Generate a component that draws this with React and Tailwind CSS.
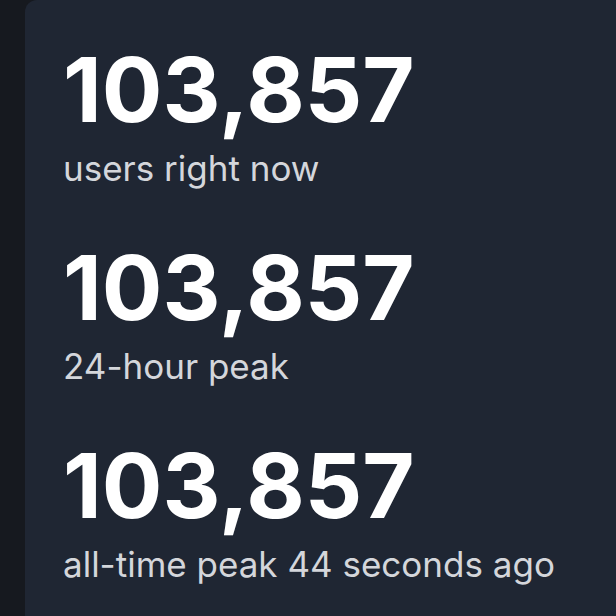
export default function App() {
  const stats = [
    { value: "103,857", label: "users right now" },
    { value: "103,857", label: "24-hour peak" },
    { value: "103,857", label: "all-time peak 44 seconds ago" },
  ];

  return (
    <div className="w-[616px] h-[616px] overflow-hidden bg-[#16191f] pl-[25px] flex font-['Inter',sans-serif]">
      <div className="flex-1 bg-[#1f2633] rounded-tl-xl pl-[38px] pt-[45px] flex flex-col gap-[55px]">
        {stats.map((s, i) => (
          <div key={i} className="flex flex-col">
            <span className="text-[90px] leading-[90px] font-bold text-white">
              {s.value}
            </span>
            <span className="text-[35px] leading-[40px] text-[#d4d6db] mt-[13px]">
              {s.label}
            </span>
          </div>
        ))}
      </div>
    </div>
  );
}
